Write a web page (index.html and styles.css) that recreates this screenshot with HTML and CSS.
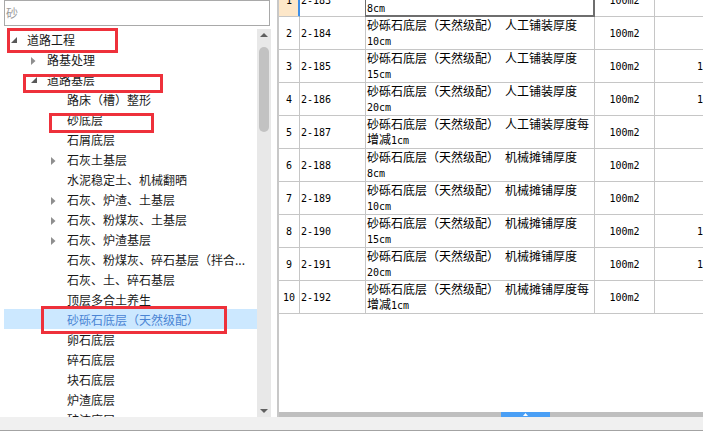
FILE: index.html
```html
<!DOCTYPE html>
<html lang="zh-CN">
<head>
<meta charset="utf-8">
<title>定额树</title>
<link rel="stylesheet" href="styles.css">
</head>
<body>
<div class="app">
  <div class="main">
    <div class="left">
      <div class="search">砂</div>
      <div class="treewrap">
        <div class="tree">
          <div class="row l0"><span class="tog"><svg class="exp" width="6" height="6" viewBox="0 0 6 6"><path d="M6 0V6H0Z"/></svg></span><span class="t">道路工程</span></div>
          <div class="row l1"><span class="tog"><svg class="col" width="5" height="8" viewBox="0 0 5 8"><path d="M0 0L4.5 4L0 8Z"/></svg></span><span class="t">路基处理</span></div>
          <div class="row l1"><span class="tog"><svg class="exp" width="6" height="6" viewBox="0 0 6 6"><path d="M6 0V6H0Z"/></svg></span><span class="t">道路基层</span></div>
          <div class="row l2"><span class="tog"></span><span class="t">路床（槽）整形</span></div>
          <div class="row l2"><span class="tog"></span><span class="t">砂底层</span></div>
          <div class="row l2"><span class="tog"></span><span class="t">石屑底层</span></div>
          <div class="row l2"><span class="tog"><svg class="col" width="5" height="8" viewBox="0 0 5 8"><path d="M0 0L4.5 4L0 8Z"/></svg></span><span class="t">石灰土基层</span></div>
          <div class="row l2"><span class="tog"></span><span class="t">水泥稳定土、机械翻晒</span></div>
          <div class="row l2"><span class="tog"><svg class="col" width="5" height="8" viewBox="0 0 5 8"><path d="M0 0L4.5 4L0 8Z"/></svg></span><span class="t">石灰、炉渣、土基层</span></div>
          <div class="row l2"><span class="tog"><svg class="col" width="5" height="8" viewBox="0 0 5 8"><path d="M0 0L4.5 4L0 8Z"/></svg></span><span class="t">石灰、粉煤灰、土基层</span></div>
          <div class="row l2"><span class="tog"><svg class="col" width="5" height="8" viewBox="0 0 5 8"><path d="M0 0L4.5 4L0 8Z"/></svg></span><span class="t">石灰、炉渣基层</span></div>
          <div class="row l2"><span class="tog"></span><span class="t">石灰、粉煤灰、碎石基层（拌合...</span></div>
          <div class="row l2"><span class="tog"></span><span class="t">石灰、土、碎石基层</span></div>
          <div class="row l2"><span class="tog"></span><span class="t">顶层多合土养生</span></div>
          <div class="row l2 sel"><span class="tog"></span><span class="t">砂砾石底层（天然级配）</span></div>
          <div class="row l2"><span class="tog"></span><span class="t">卵石底层</span></div>
          <div class="row l2"><span class="tog"></span><span class="t">碎石底层</span></div>
          <div class="row l2"><span class="tog"></span><span class="t">块石底层</span></div>
          <div class="row l2"><span class="tog"></span><span class="t">炉渣底层</span></div>
          <div class="row l2"><span class="tog"></span><span class="t">矿渣底层</span></div>
        </div>
        <div class="vscroll">
          <svg class="arrow up" width="8" height="4" viewBox="0 0 8 4"><path d="M0 4L4 0L8 4Z"/></svg>
          <div class="thumb"></div>
          <div class="track"></div>
          <svg class="arrow down" width="8" height="4" viewBox="0 0 8 4"><path d="M0 0L8 0L4 4Z"/></svg>
        </div>
      </div>
    </div>
    <div class="gap"></div>
    <div class="right">
      <div class="viewport">
        <div class="grid">
          <div class="gr first">
            <div class="c num cur">1</div><div class="c code">2-183</div>
            <div class="c name selcell"><div>砂砾石底层（天然级配）&ensp;人工铺装厚度</div><div><span class="lat">8cm</span></div></div>
            <div class="c unit">100m2</div><div class="c qty"></div><div class="c rest"></div>
          </div>
          <div class="gr">
            <div class="c num">2</div><div class="c code">2-184</div>
            <div class="c name"><div>砂砾石底层（天然级配）&ensp;人工铺装厚度</div><div><span class="lat">10cm</span></div></div>
            <div class="c unit">100m2</div><div class="c qty"></div><div class="c rest"></div>
          </div>
          <div class="gr">
            <div class="c num">3</div><div class="c code">2-185</div>
            <div class="c name"><div>砂砾石底层（天然级配）&ensp;人工铺装厚度</div><div><span class="lat">15cm</span></div></div>
            <div class="c unit">100m2</div><div class="c qty">1</div><div class="c rest"></div>
          </div>
          <div class="gr">
            <div class="c num">4</div><div class="c code">2-186</div>
            <div class="c name"><div>砂砾石底层（天然级配）&ensp;人工铺装厚度</div><div><span class="lat">20cm</span></div></div>
            <div class="c unit">100m2</div><div class="c qty">1</div><div class="c rest"></div>
          </div>
          <div class="gr">
            <div class="c num">5</div><div class="c code">2-187</div>
            <div class="c name"><div>砂砾石底层（天然级配）&ensp;人工铺装厚度每</div><div>增减<span class="lat">1cm</span></div></div>
            <div class="c unit">100m2</div><div class="c qty"></div><div class="c rest"></div>
          </div>
          <div class="gr">
            <div class="c num">6</div><div class="c code">2-188</div>
            <div class="c name"><div>砂砾石底层（天然级配）&ensp;机械摊铺厚度</div><div><span class="lat">8cm</span></div></div>
            <div class="c unit">100m2</div><div class="c qty"></div><div class="c rest"></div>
          </div>
          <div class="gr">
            <div class="c num">7</div><div class="c code">2-189</div>
            <div class="c name"><div>砂砾石底层（天然级配）&ensp;机械摊铺厚度</div><div><span class="lat">10cm</span></div></div>
            <div class="c unit">100m2</div><div class="c qty"></div><div class="c rest"></div>
          </div>
          <div class="gr">
            <div class="c num">8</div><div class="c code">2-190</div>
            <div class="c name"><div>砂砾石底层（天然级配）&ensp;机械摊铺厚度</div><div><span class="lat">15cm</span></div></div>
            <div class="c unit">100m2</div><div class="c qty">1</div><div class="c rest"></div>
          </div>
          <div class="gr">
            <div class="c num">9</div><div class="c code">2-191</div>
            <div class="c name"><div>砂砾石底层（天然级配）&ensp;机械摊铺厚度</div><div><span class="lat">20cm</span></div></div>
            <div class="c unit">100m2</div><div class="c qty">1</div><div class="c rest"></div>
          </div>
          <div class="gr">
            <div class="c num">10</div><div class="c code">2-192</div>
            <div class="c name"><div>砂砾石底层（天然级配）&ensp;机械摊铺厚度每</div><div>增减<span class="lat">1cm</span></div></div>
            <div class="c unit">100m2</div><div class="c qty"></div><div class="c rest"></div>
          </div>
        </div>
      </div>
      <div class="hbar"><div class="hthumb"><svg width="5" height="3" viewBox="0 0 5 3"><path d="M0 3L2.5 0L5 3Z"/></svg></div></div>
    </div>
  </div>
  <div class="status"></div>

  <div class="mark m1"></div>
  <div class="mark m2"></div>
  <div class="mark m3"></div>
  <div class="mark m4"></div>
</div>
</body>
</html>
```

FILE: styles.css
```css
* { box-sizing: border-box; }
html, body { margin: 0; padding: 0; background: #fff; }
body {
  width: 703px; height: 442px; overflow: hidden;
  font-family: "Noto Sans CJK SC", "Noto Sans", sans-serif;
  font-size: 12px; color: #1a1a1a;
}
.app { position: relative; width: 703px; height: 442px; display: flex; flex-direction: column; }
.main { display: flex; height: 417px; }

/* left panel */
.left { width: 271px; display: flex; flex-direction: column; }
.search {
  margin-left: 4px; width: 266px; height: 26px; margin-bottom: 3px;
  border: 1px solid #a9a9a9; color: #9a9a9a;
  padding-left: 1px; line-height: 24px;
}
.treewrap { flex: 1; display: flex; min-height: 0; }
.tree { margin-left: 4px; width: 253px; overflow: hidden; }
.row { height: 20px; display: flex; align-items: flex-start; white-space: nowrap; }
.row.l1 { padding-left: 20px; }
.row.l2 { padding-left: 40px; }
.tog { width: 23px; height: 20px; flex: none; display: flex; align-items: flex-start; }
.tog .exp { margin: 8px 0 0 7px; fill: #595959; }
.tog .col { margin: 8px 0 0 7px; fill: #8f8f8f; }
.t { line-height: 20px; padding-top: 1px; color: #1a1a1a; }
.row.sel { background: #cce8ff; }
.row.sel .t { color: #4a84d4; }

.vscroll { width: 14px; background: #e8e8e8; display: flex; flex-direction: column; align-items: center; }
.arrow { fill: #606060; flex: none; }
.arrow.up { margin-top: 4px; }
.arrow.down { margin-bottom: 4px; }
.thumb { width: 10px; height: 85px; margin-top: 10px; background: #c2c2c2; border-radius: 5px; flex: none; }
.track { flex: 1; }

.gap { width: 6px; }

/* right grid */
.right { flex: 1; display: flex; flex-direction: column; border-left: 2px solid #c8c8c8; min-width: 0; }
.viewport { flex: 1; overflow: hidden; }
.grid { margin-top: -16px; }
.gr {
  display: grid; height: 33px;
  grid-template-columns: 21px 66px 229px 60px 52px 80px;
  color: #000;
}
.c { border-right: 1px solid #c6c6c6; border-bottom: 1px solid #c6c6c6; white-space: nowrap; overflow: hidden; }
.num, .code, .unit, .qty, .lat {
  font-family: "DejaVu Sans Mono", "Liberation Mono", monospace; font-size: 10px;
}
.num { display: flex; align-items: center; justify-content: center; }
.code { display: flex; align-items: center; padding-left: 1px; }
.name { line-height: 15px; padding-left: 1px; }
.unit { display: flex; align-items: center; justify-content: center; }
.qty { display: flex; align-items: center; justify-content: flex-end; padding-right: 3px; }
.num.cur { background: #fde7c9; border-right-color: #3d8fe8; box-shadow: inset -1px 0 #3d8fe8; }
.selcell { box-shadow: -1px 0 #6e6e6e, inset -1px 0 #6e6e6e, inset 0 -1px #6e6e6e; border-right-color: #6e6e6e; border-bottom-color: #6e6e6e; }

.hbar { height: 5px; background: #bfbfbf; position: relative; display: flex; }
.hthumb { margin-left: 222px; width: 49px; height: 5px; background: #4a9ff5; display: flex; justify-content: center; align-items: center; }
.hthumb svg { fill: #fff; }

.status { height: 14px; background: #f0f0f0; border-bottom: 1px solid #a3a3a3; }

/* annotation boxes */
.mark { position: absolute; border: 3px solid #ee313b; }
.m1 { left: 7px; top: 28px; width: 111px; height: 25px; }
.m2 { left: 23px; top: 74px; width: 140px; height: 19px; }
.m3 { left: 49px; top: 113px; width: 105px; height: 20px; }
.m4 { left: 41px; top: 306px; width: 186px; height: 28px; }
```
